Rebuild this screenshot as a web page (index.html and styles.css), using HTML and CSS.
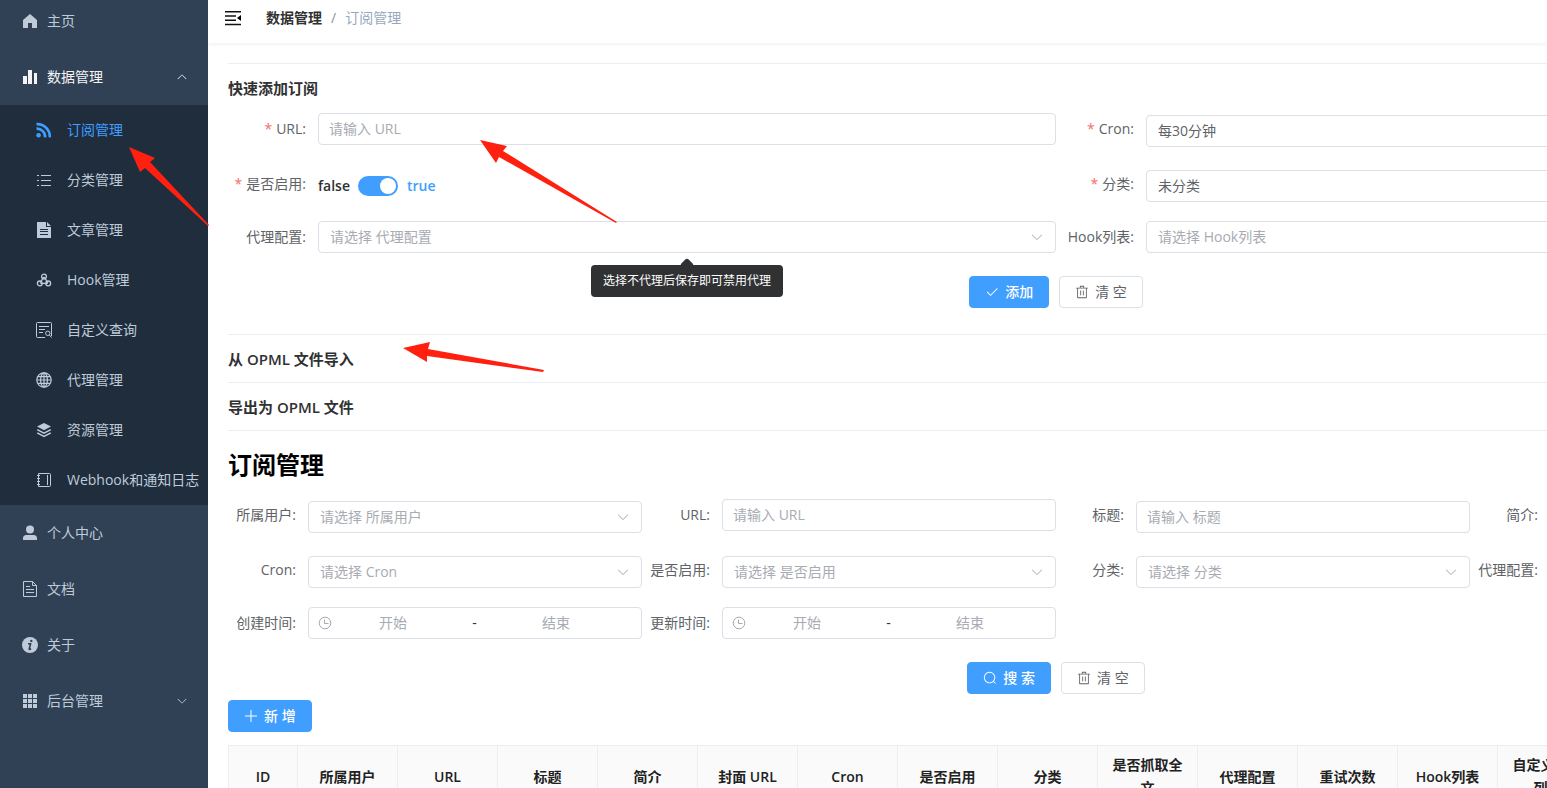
FILE: index.html
```html
<!doctype html>
<html lang="zh-CN">
<head>
	<meta charset="UTF-8">
	<title>订阅管理</title>
	<link rel="stylesheet" href="styles.css">
</head>
<body>

<svg class="defs" width="0" height="0">
	<symbol id="i-down" viewBox="0 0 1024 1024"><path fill="currentColor" d="M831.872 340.864 512 652.672 192.128 340.864a30.592 30.592 0 0 0-42.752 0 29.12 29.12 0 0 0 0 41.6L489.664 714.24a32 32 0 0 0 44.672 0l340.288-331.712a29.12 29.12 0 0 0 0-41.728 30.592 30.592 0 0 0-42.752 0z"/></symbol>
	<symbol id="i-check" viewBox="0 0 1024 1024"><path fill="currentColor" d="M406.656 706.944 195.84 496.256a32 32 0 1 0-45.248 45.248l256 256 512-512a32 32 0 0 0-45.248-45.248L406.592 706.944z"/></symbol>
	<symbol id="i-delete" viewBox="0 0 1024 1024"><path fill="currentColor" d="M160 256H96a32 32 0 0 1 0-64h256V95.936a32 32 0 0 1 32-32h256a32 32 0 0 1 32 32V192h256a32 32 0 1 1 0 64h-64v672a32 32 0 0 1-32 32H192a32 32 0 0 1-32-32zm448-64v-64H416v64zM224 896h576V256H224zm192-128a32 32 0 0 1-32-32V416a32 32 0 0 1 64 0v320a32 32 0 0 1-32 32m192 0a32 32 0 0 1-32-32V416a32 32 0 0 1 64 0v320a32 32 0 0 1-32 32"/></symbol>
	<symbol id="i-search" viewBox="0 0 1024 1024"><path fill="currentColor" d="m795.904 750.72 124.992 124.928a32 32 0 0 1-45.248 45.248L750.656 795.904a416 416 0 1 1 45.248-45.248zM480 832a352 352 0 1 0 0-704 352 352 0 0 0 0 704"/></symbol>
	<symbol id="i-plus" viewBox="0 0 14 14"><path fill="none" stroke="currentColor" d="M7 1v12M1 7h12"/></symbol>
	<symbol id="i-clock" viewBox="0 0 14 14"><g fill="none" stroke="currentColor"><circle cx="7" cy="7" r="5.8"/><path d="M6.5 3.5v4h4"/></g></symbol>
</svg>

<div class="app">
	<nav class="sidebar">
		<a class="item" href="#">
			<svg class="ico" viewBox="0 0 16 16"><path fill="currentColor" d="M8 1 1 7v8h5v-5h4v5h5V7z"/></svg>
			<span>主页</span>
		</a>
		<a class="item open" href="#">
			<svg class="ico" viewBox="0 0 16 16"><path fill="currentColor" d="M1 7h4v8H1zM6 1h4v14H6zM12 4h3v11h-3z"/></svg>
			<span>数据管理</span>
			<svg class="caret up"><use href="#i-down"/></svg>
		</a>
		<div class="submenu">
			<a class="item active" href="#">
				<svg class="ico" viewBox="0 0 16 16"><circle cx="2.6" cy="13.2" r="2.3" fill="currentColor"/><path fill="none" stroke="currentColor" stroke-width="2.6" d="M.5 6.6a8.2 8.2 0 0 1 8.6 8.8M.5 2.1a12.6 12.6 0 0 1 13.3 13.3"/></svg>
				<span>订阅管理</span>
			</a>
			<a class="item" href="#">
				<svg class="ico" viewBox="0 0 16 16"><path stroke="currentColor" d="M5 3.5h10M5 8.5h10M5 13.5h10M1 3.5h2M1 8.5h2M1 13.5h2"/></svg>
				<span>分类管理</span>
			</a>
			<a class="item" href="#">
				<svg class="ico" viewBox="0 0 16 16"><path fill="currentColor" fill-rule="evenodd" d="M1 0h9v5h5v11H1zM4 7v1h8V7zM4 9v1h8V9zM4 12v1h8v-1zM11 0l4 4h-4z"/></svg>
				<span>文章管理</span>
			</a>
			<a class="item" href="#">
				<svg class="ico" viewBox="0 0 16 16"><g fill="none" stroke="currentColor" stroke-width="1.3"><circle cx="8" cy="4.6" r="2.4"/><circle cx="3.8" cy="11.4" r="2.4"/><circle cx="12.2" cy="11.4" r="2.4"/><path d="M7.6 5 4.4 10.6M8.4 5l3.4 6M4.4 11.4h7.4"/></g></svg>
				<span>Hook管理</span>
			</a>
			<a class="item" href="#">
				<svg class="ico" viewBox="0 0 16 16"><g fill="none" stroke="currentColor"><path d="M9 15.5H1.5a1 1 0 0 1-1-1v-13a1 1 0 0 1 1-1h13a1 1 0 0 1 1 1V14M3 4.5h10M3 7.5h6M3 10.5h4"/><circle cx="11.8" cy="11.3" r="2.2"/><path d="m13.4 13 2.2 2.6"/></g></svg>
				<span>自定义查询</span>
			</a>
			<a class="item" href="#">
				<svg class="ico" viewBox="0 0 16 16"><g fill="none" stroke="currentColor" stroke-width="1.2"><circle cx="8" cy="8" r="7.2"/><ellipse cx="8" cy="8" rx="3.4" ry="7.2"/><path d="M8 1v14M1 8h14M2 4.7h12M2 11.3h12"/></g></svg>
				<span>代理管理</span>
			</a>
			<a class="item" href="#">
				<svg class="ico" viewBox="0 0 16 16"><path fill="currentColor" d="m8 1 7 3.6-7 3.6-7-3.6z"/><path fill="none" stroke="currentColor" stroke-width="1.5" d="m1.2 7.6 6.8 3.6 6.8-3.6M1.2 10.8 8 14.4l6.8-3.6"/></svg>
				<span>资源管理</span>
			</a>
			<a class="item" href="#">
				<svg class="ico" viewBox="0 0 16 16"><path fill="none" stroke="currentColor" d="M2.5 1.5h11a1 1 0 0 1 1 1v11a1 1 0 0 1-1 1h-11zM11.5 3v10M1 3.5h3M1 6.5h3M1 9.5h3M1 12.5h3"/></svg>
				<span>Webhook和通知日志</span>
			</a>
		</div>
		<a class="item" href="#">
			<svg class="ico" viewBox="0 0 16 16"><circle cx="8" cy="4.5" r="4" fill="currentColor"/><path fill="currentColor" d="M1 15v-2.5A3 3 0 0 1 4 10h8a3 3 0 0 1 3 2.5V15z"/></svg>
			<span>个人中心</span>
		</a>
		<a class="item" href="#">
			<svg class="ico" viewBox="0 0 16 16"><path fill="none" stroke="currentColor" d="M1.5.5h9l4 4v11h-13zM10.5.5v4h4M4 5.5h4M4 8.5h8M4 11.5h8"/></svg>
			<span>文档</span>
		</a>
		<a class="item" href="#">
			<svg class="ico" viewBox="0 0 16 16"><circle cx="8" cy="8" r="8" fill="currentColor"/><circle cx="9.3" cy="3.9" r="1.2" fill="#304156"/><path fill="none" stroke="#304156" stroke-width="1.6" d="M6 6.7h2.6L7.2 12q-.2 1 1.9-.2"/></svg>
			<span>关于</span>
		</a>
		<a class="item" href="#">
			<svg class="ico" viewBox="0 0 16 16"><path fill="currentColor" d="M1 1h4v4H1zM6 1h4v4H6zM11 1h4v4h-4zM1 6h4v4H1zM6 6h4v4H6zM11 6h4v4h-4zM1 11h4v4H1zM6 11h4v4H6zM11 11h4v4h-4z"/></svg>
			<span>后台管理</span>
			<svg class="caret"><use href="#i-down"/></svg>
		</a>
	</nav>

	<main class="main">
		<header class="topbar">
			<button class="fold" type="button" aria-label="折叠菜单">
				<svg viewBox="0 0 16 16"><path stroke="#111" stroke-width="1.5" d="M0 1.7h16M0 6h11M0 10.3h11M0 14.5h16"/><path d="M16 5v6l-4-3z"/></svg>
			</button>
			<div class="breadcrumb"><a href="#">数据管理</a><i>/</i><span>订阅管理</span></div>
		</header>

		<div class="content">
			<section class="panel">
				<h4>快速添加订阅</h4>
				<form class="form two">
					<div class="field">
						<label class="req" for="a-url">URL:</label>
						<div class="ctl"><input id="a-url" type="text" placeholder="请输入 URL"></div>
					</div>
					<div class="field">
						<label class="req" for="a-cron">Cron:</label>
						<div class="ctl low"><select class="val" id="a-cron"><option>每30分钟</option></select></div>
					</div>
					<div class="field">
						<label class="req" for="a-on">是否启用:</label>
						<div class="ctl low switch"><span>false</span><input id="a-on" type="checkbox" checked><span class="on">true</span></div>
					</div>
					<div class="field">
						<label class="req" for="a-cat">分类:</label>
						<div class="ctl low"><select class="val" id="a-cat"><option>未分类</option></select></div>
					</div>
					<div class="field">
						<label for="a-proxy">代理配置:</label>
						<div class="ctl">
							<select id="a-proxy"><option>请选择 代理配置</option></select><svg class="arr"><use href="#i-down"/></svg>
							<div class="tip">选择不代理后保存即可禁用代理</div>
						</div>
					</div>
					<div class="field">
						<label for="a-hook">Hook列表:</label>
						<div class="ctl"><select id="a-hook"><option>请选择 Hook列表</option></select></div>
					</div>
					<div class="btns">
						<button class="btn primary" type="button"><svg><use href="#i-check"/></svg>添加</button>
						<button class="btn" type="button"><svg><use href="#i-delete"/></svg>清 空</button>
					</div>
				</form>
			</section>
			<section class="panel"><h4>从 OPML 文件导入</h4></section>
			<section class="panel last"><h4>导出为 OPML 文件</h4></section>

			<h2>订阅管理</h2>

			<form class="form four">
				<div class="field">
					<label for="s-user">所属用户:</label>
					<div class="ctl low"><select id="s-user"><option>请选择 所属用户</option></select><svg class="arr"><use href="#i-down"/></svg></div>
				</div>
				<div class="field">
					<label for="s-url">URL:</label>
					<div class="ctl"><input id="s-url" type="text" placeholder="请输入 URL"></div>
				</div>
				<div class="field">
					<label for="s-title">标题:</label>
					<div class="ctl low"><input id="s-title" type="text" placeholder="请输入 标题"></div>
				</div>
				<div class="field">
					<label for="s-intro">简介:</label>
					<div class="ctl low"><input id="s-intro" type="text"></div>
				</div>
				<div class="field">
					<label for="s-cron">Cron:</label>
					<div class="ctl low"><select id="s-cron"><option>请选择 Cron</option></select><svg class="arr"><use href="#i-down"/></svg></div>
				</div>
				<div class="field">
					<label for="s-on">是否启用:</label>
					<div class="ctl low"><select id="s-on"><option>请选择 是否启用</option></select><svg class="arr"><use href="#i-down"/></svg></div>
				</div>
				<div class="field">
					<label for="s-cat">分类:</label>
					<div class="ctl low"><select id="s-cat"><option>请选择 分类</option></select><svg class="arr"><use href="#i-down"/></svg></div>
				</div>
				<div class="field">
					<label for="s-proxy">代理配置:</label>
					<div class="ctl low"><select id="s-proxy"></select></div>
				</div>
				<div class="field">
					<label for="s-created">创建时间:</label>
					<div class="ctl range"><svg><use href="#i-clock"/></svg><input id="s-created" type="text" placeholder="开始"><span>-</span><input type="text" placeholder="结束" aria-label="创建时间"></div>
				</div>
				<div class="field">
					<label for="s-updated">更新时间:</label>
					<div class="ctl range"><svg><use href="#i-clock"/></svg><input id="s-updated" type="text" placeholder="开始"><span>-</span><input type="text" placeholder="结束" aria-label="更新时间"></div>
				</div>
				<div class="btns">
					<button class="btn primary" type="button"><svg><use href="#i-search"/></svg>搜 索</button>
					<button class="btn" type="button"><svg><use href="#i-delete"/></svg>清 空</button>
				</div>
			</form>

			<button class="btn primary" type="button"><svg><use href="#i-plus"/></svg>新 增</button>

			<table class="grid">
				<thead>
					<tr>
						<th class="id">ID</th>
						<th>所属用户</th>
						<th>URL</th>
						<th>标题</th>
						<th>简介</th>
						<th>封面 URL</th>
						<th>Cron</th>
						<th>是否启用</th>
						<th>分类</th>
						<th>是否抓取全文</th>
						<th>代理配置</th>
						<th>重试次数</th>
						<th>Hook列表</th>
						<th>自定义查询列表</th>
					</tr>
				</thead>
			</table>
		</div>
	</main>
</div>

<!-- red pointers over the page -->
<svg class="marks" width="640" height="400">
	<path d="M129 147 155 158 150 162 209 225 208 226 145 168 140 172z"/>
	<path d="M480 140 507 146 503 151 617 222 616 223 499 157 496 163z"/>
	<path d="M403 348 430 342 428 349 544 370 543 372 427 356V362z"/>
</svg>

</body>
</html>
```
FILE: styles.css
```css
* {box-sizing:border-box;}
body {margin:0; height:100vh; overflow:hidden; position:relative; background:#fff; color:#303133; font:14px/20px "Open Sans","Noto Sans CJK SC",sans-serif;}
input, select, button {font:inherit; color:inherit; margin:0;}
a {color:inherit; text-decoration:none;}
.defs {position:absolute;}

/* the page is scrolled down a little */
.app {display:flex; min-height:calc(100vh + 7px); margin-top:-7px;}

.sidebar {flex:none; width:208px; background:#304156; color:#bfcbd9;}
.item {display:flex; align-items:center; height:56px; padding:0 20px 0 22px; white-space:nowrap;}
.item span {flex:1;}
.ico {flex:none; width:16px; height:16px; margin-right:9px;}
.caret {width:12px; height:12px;}
.up {transform:rotate(180deg);}
.open {color:#f4f4f5;}
.submenu {background:#1f2d3d;}
.submenu .item {height:50px; padding:0 10px 0 36px;}
.submenu .ico {margin-right:15px;}
.submenu .active {color:#409eff;}

.main {flex:1; min-width:0; overflow:hidden;}
.topbar {display:flex; align-items:center; height:50px; padding-left:17px; box-shadow:0 1px 4px rgba(0,21,41,.08);}
.fold {width:16px; height:16px; padding:0; border:0; background:none;}
.fold svg {display:block;}
.breadcrumb {margin-left:25px; color:#97a8be;}
.breadcrumb a {color:#303133; font-weight:600;}
.breadcrumb i {margin:0 9px; color:#909399; font-style:normal;}

.content {min-width:1696px; padding:20px;}
.panel {border-top:1px solid #ebeef5;}
.panel .form {padding:2px 0 26px;}
.last {border-bottom:1px solid #ebeef5;}
h4 {margin:0; font-size:15px; line-height:47px; padding-top:1px; margin-bottom:-1px; font-weight:600;}
h2 {margin:16px 0; font-size:24px; line-height:36px; color:#000;}

.form {display:grid; grid-template-rows:55px 53px 55px 32px;}
.two {grid-template-columns:repeat(2, 1fr);}
.four {grid-template-columns:repeat(4, 1fr); margin-bottom:6px;}
.field {display:flex; align-items:flex-start; min-width:0;}
.field label {flex:none; width:80px; padding-right:12px; line-height:32px; text-align:right; color:#606266; white-space:nowrap;}
.two label {width:90px;}
.req::before {content:"*"; color:#f56c6c; margin-right:4px;}
.ctl {position:relative; flex:1; min-width:0;}
.low {margin-top:2px;}
.ctl input[type=text], .ctl select {display:block; width:100%; height:32px; padding:0 11px; border:1px solid #dcdfe6; border-radius:4px; background:#fff; color:#a8abb2; appearance:none; outline:0;}
.ctl input[type=text] {padding:0 10px 1px;}
.ctl .val {color:#606266;}
::placeholder {color:#a8abb2; opacity:1;}
.arr {position:absolute; right:12px; top:9px; width:14px; height:14px; color:#a8abb2; pointer-events:none;}

.switch {display:flex; align-items:center; height:32px; font-weight:600;}
.switch input {appearance:none; width:40px; height:20px; margin:0 9px 0 8px; padding:2px; border-radius:10px; background:#409eff;}
.switch input::before {content:""; display:block; width:16px; height:16px; margin-left:20px; border-radius:50%; background:#fff;}
.on {color:#409eff;}

.tip {position:absolute; top:44px; left:50%; transform:translateX(-50%); z-index:2; padding:6px 12px; border-radius:4px; background:#303133; color:#fff; font-size:12px; white-space:nowrap;}
.tip::before {content:""; position:absolute; top:-5px; left:50%; width:10px; height:10px; margin-left:-5px; border-radius:2px; background:#303133; transform:rotate(45deg); z-index:-1;}

.range {display:flex; align-items:center; height:32px; padding:0 24px 0 9px; border:1px solid #dcdfe6; border-radius:4px;}
.range svg {flex:none; width:14px; height:14px; color:#a8abb2;}
.ctl.range input[type=text] {flex:3; width:0; height:30px; padding:0 0 1px; border:0; background:none; text-align:center;}
.range span {flex:1; text-align:center;}

.btns {grid-column:1 / -1; grid-row:4; display:flex; justify-content:center; gap:10px;}
.btn {display:inline-flex; align-items:center; gap:6px; height:32px; padding:0 15px; border:1px solid #dcdfe6; border-radius:4px; background:#fff; color:#606266; white-space:nowrap;}
.btn svg {width:14px; height:14px;}
.primary {border-color:#409eff; background:#409eff; color:#fff; font-weight:500;}

.grid {width:1370px; margin-top:13px; table-layout:fixed; border-collapse:separate; border-spacing:0; border-top:1px solid #ebeef5; border-left:1px solid #ebeef5;}
.grid th {padding:7px 12px 9px; border-right:1px solid #ebeef5; border-bottom:1px solid #ebeef5; background:#fafafa; color:#222; font-weight:600; line-height:23px; text-align:center;}
.grid .id {width:69px;}

.marks {position:absolute; left:0; top:0; fill:#ff2010; pointer-events:none; z-index:3;}
```
